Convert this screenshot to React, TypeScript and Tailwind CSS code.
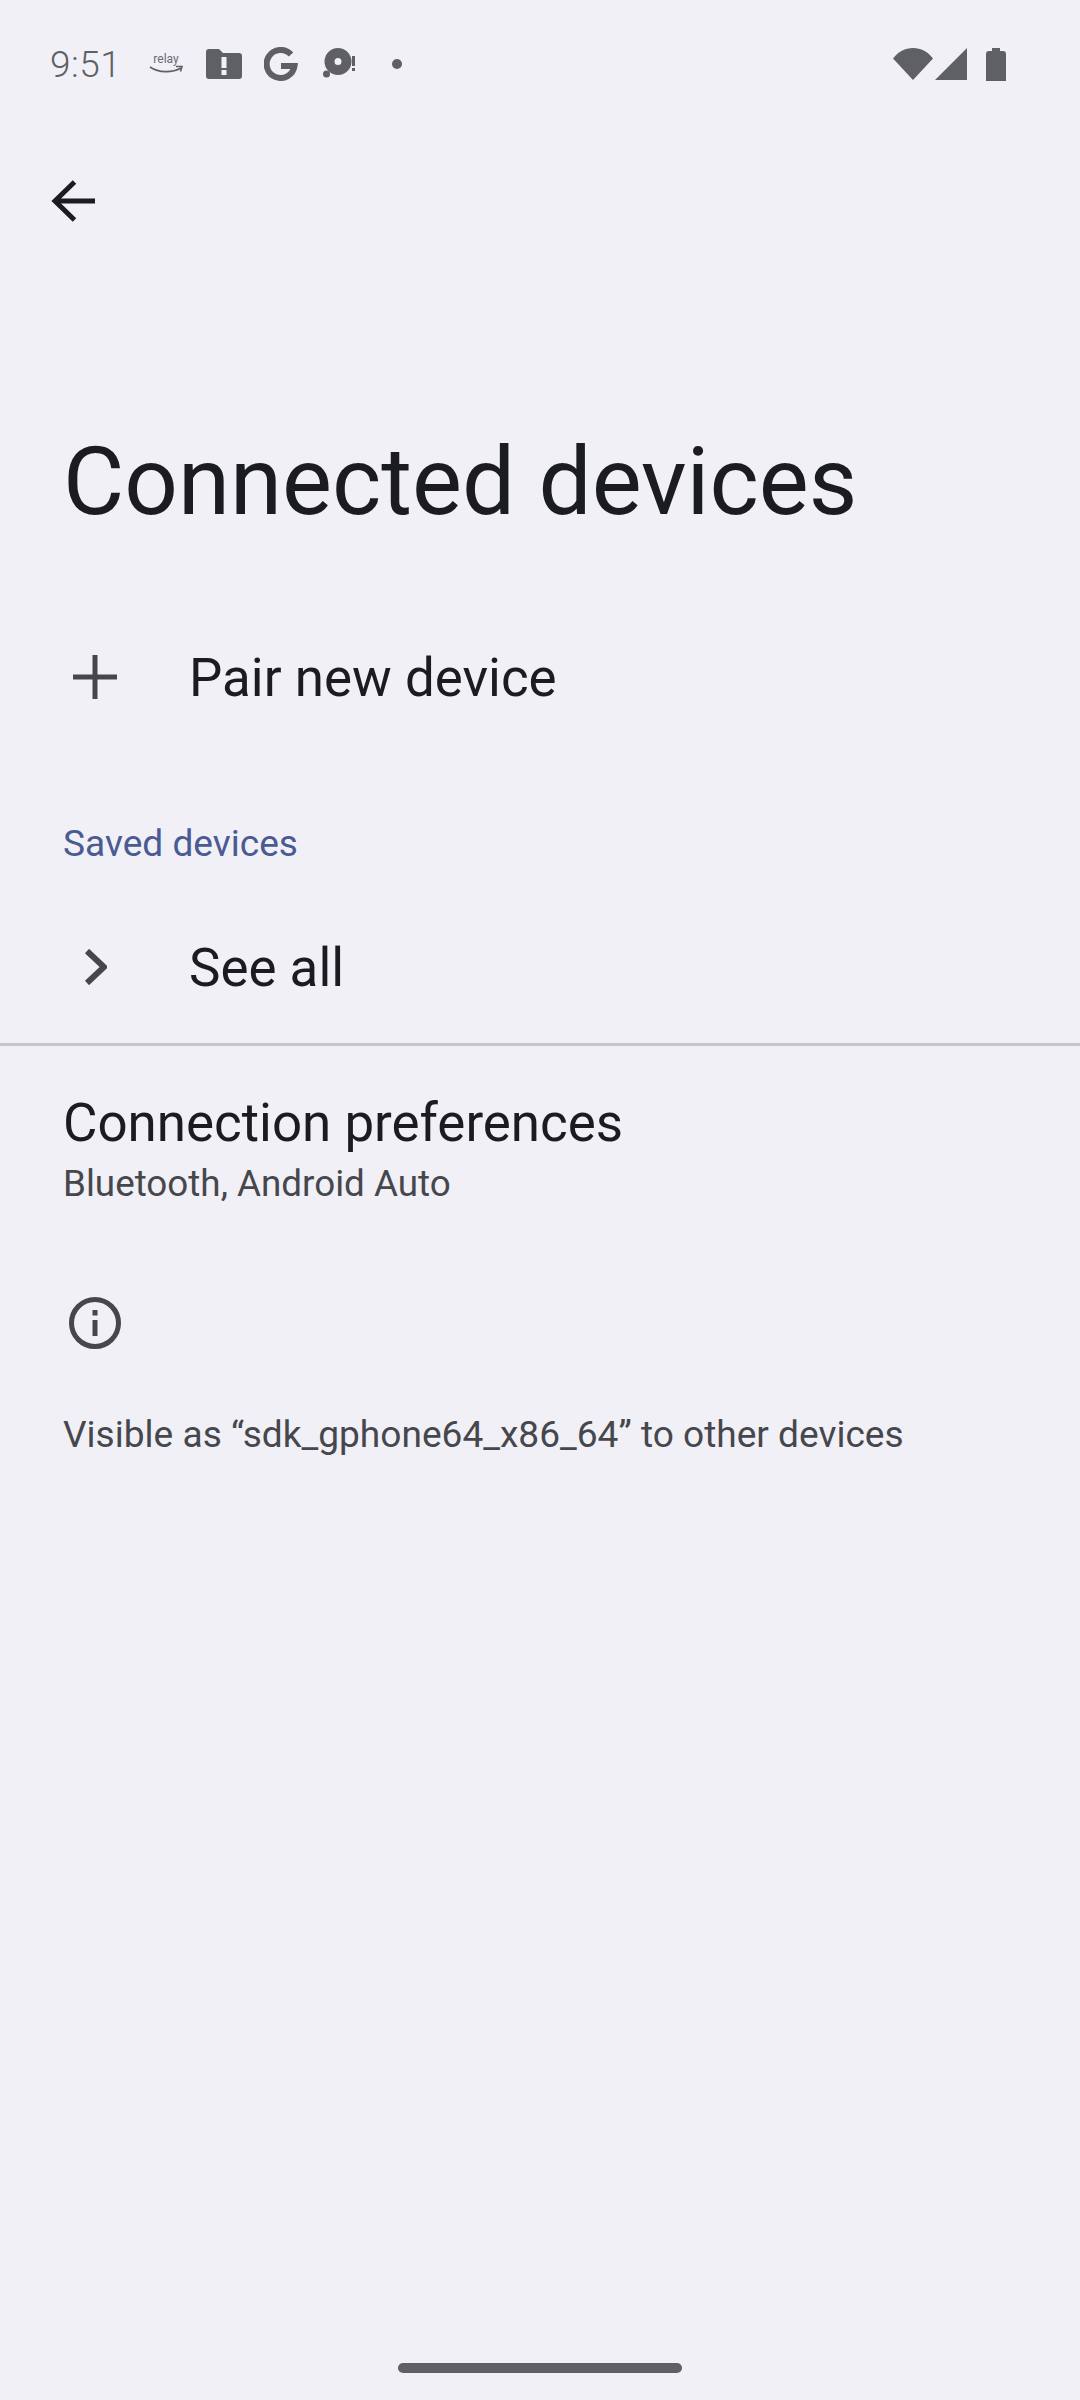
export default function App() {
  return (
    <div className="w-[1080px] h-[2400px] bg-[#f1f0f7] flex flex-col overflow-hidden" style={{ fontFamily: 'Roboto, sans-serif' }}>
      {/* status bar */}
      <div className="h-[88px] pt-[40px] pl-[50px] pr-[73px] flex items-center text-[#5f6066]">
        <span className="text-[37px] w-[100px] leading-none font-light tracking-[0.5px]">9:51</span>
        <div className="w-[36px] flex flex-col items-center -ml-[2px]">
          <span className="text-[12px] leading-[12px] text-[#6a6b71]">relay</span>
          <svg width="34" height="10" viewBox="0 0 34 10" fill="none" stroke="#5f6066" strokeWidth="1.6"><path d="M1 2c9 6 22 6 31 1" /><path d="M27 1.5h6l-1.5 5" /></svg>
        </div>
        <svg className="ml-[22px]" width="36" height="30" viewBox="0 0 36 30" fill="#5f6066"><path d="M3 0h10l4 4h16a3 3 0 0 1 3 3v20a3 3 0 0 1-3 3H3a3 3 0 0 1-3-3V3a3 3 0 0 1 3-3z" /><rect x="15.5" y="8" width="5" height="11" fill="#f1f0f7" /><rect x="15.5" y="21" width="5" height="5" fill="#f1f0f7" /></svg>
        <svg className="ml-[22px]" width="34" height="34" viewBox="0 0 34 34" fill="none" stroke="#5f6066" strokeWidth="6"><path d="M27 7.5A14 14 0 1 0 30.5 19H17" /></svg>
        <svg className="ml-[25px]" width="34" height="32" viewBox="0 0 34 32" fill="#5f6066"><path fillRule="evenodd" d="M15 0a13.5 13.5 0 1 1 0 27 13.5 13.5 0 0 1 0-27zm0 10a3.5 3.5 0 1 0 0 7 3.5 3.5 0 0 0 0-7z" /><circle cx="3.5" cy="26" r="3.5" /><rect x="29" y="8" width="3" height="10" /><rect x="29" y="20" width="3" height="3" /></svg>
        <div className="ml-[35px] w-[10px] h-[10px] rounded-full bg-[#5f6066]" />
        <div className="flex-1" />
        <svg width="40" height="32" viewBox="0 0 40 32" fill="#5f6066"><path d="M0 10.500C5 4 12 0 20 0s15 4 20 10.500L20 32z" /></svg>
        <svg width="32" height="32" viewBox="0 0 32 32" fill="#5f6066" className="ml-[2px]"><path d="M32 0v32H0z" /></svg>
        <svg width="20" height="33" viewBox="0 0 20 33" fill="#5f6066" className="ml-[19px] mr-[1px]"><path d="M6 3V0h8v3h3a3 3 0 0 1 3 3v27H0V6a3 3 0 0 1 3-3z" /></svg>
      </div>
      {/* app bar */}
      <div className="mt-[57px] h-[112px] pl-[51px] flex items-center">
        <svg width="44" height="44" viewBox="0 0 44 44" fill="none" stroke="#1a1c21" strokeWidth="5"><path d="M44 22H4" /><path d="M23.500 3 4 22l19.500 19" /></svg>
      </div>
      {/* title */}
      <h1 className="mt-[170px] pl-[63px] text-[94.200px] leading-[110px] text-[#1a1c21] font-normal whitespace-nowrap">Connected devices</h1>
      {/* pair */}
      <div className="mt-[91px] h-[100px] flex items-center">
        <div className="w-[189px] flex justify-center">
          <svg className="-mt-[3px]" width="44" height="44" viewBox="0 0 44 44" fill="#46474c"><path d="M19.500 0h5v19.500H44v5H24.500V44h-5V24.500H0v-5h19.500z" /></svg>
        </div>
        <span className="text-[52.900px] text-[#1a1c21] leading-none">Pair new device</span>
      </div>
      {/* header */}
      <div className="mt-[94px] pl-[63px] text-[37.100px] leading-[44px] text-[#4a5a92]">Saved devices</div>
      {/* see all */}
      <div className="mt-[53px] h-[98px] flex items-center">
        <div className="w-[189px] flex justify-center">
          <svg className="-mt-[2px]" width="24" height="36" viewBox="0 0 24 36" fill="none" stroke="#46474c" strokeWidth="6"><path d="M4 2l17 16L4 34" /></svg>
        </div>
        <span className="text-[52.900px] text-[#1a1c21] leading-none">See all</span>
      </div>
      <div className="mt-[26px] h-[3px] bg-[#c6c6cc]" />
      {/* prefs */}
      <div className="mt-[46px] pl-[63px]">
        <div className="text-[52.900px] leading-[62px] text-[#1a1c21]">Connection preferences</div>
        <div className="text-[36.800px] leading-[44px] mt-[8px] text-[#46474c]">Bluetooth, Android Auto</div>
      </div>
      {/* footer */}
      <div className="mt-[91px] pl-[69px]">
        <svg width="52" height="52" viewBox="0 0 52 52" fill="none"><circle cx="26" cy="26" r="23.500" stroke="#46474c" strokeWidth="5" /><rect x="23.500" y="13" width="5" height="5.500" fill="#46474c" /><rect x="23.500" y="23" width="5" height="16" fill="#46474c" /></svg>
      </div>
      <div className="mt-[64px] pl-[63px] text-[37.100px] leading-[44px] text-[#46474c] whitespace-nowrap">Visible as “sdk_gphone64_x86_64” to other devices</div>
      <div className="flex-1" />
      <div className="pb-[27px] flex justify-center">
        <div className="w-[284px] h-[10px] rounded-full bg-[#5f6065]" />
      </div>
    </div>
  );
}
